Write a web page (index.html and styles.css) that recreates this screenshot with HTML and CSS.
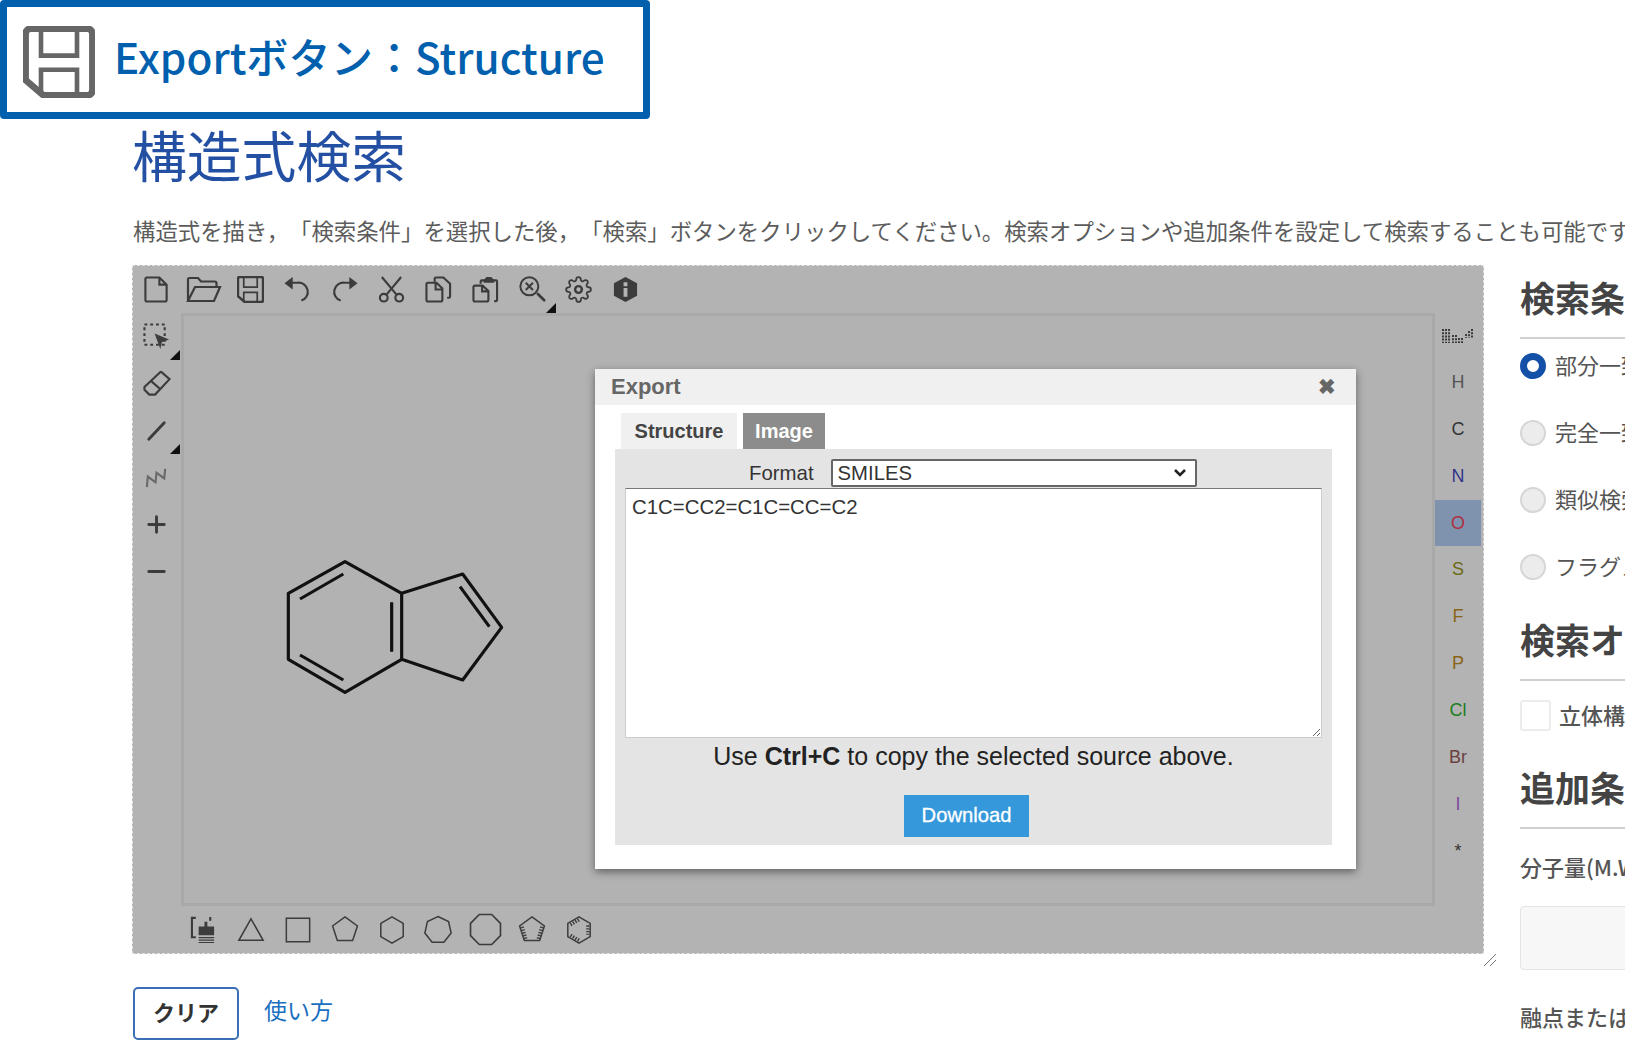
FILE: index.html
```html
<!DOCTYPE html>
<html>
<head>
    <title>構造式検索</title>
    <meta http-equiv="Content-Type" content="text/html; charset=utf-8" />
    <link rel="stylesheet" href="styles.css">
</head>
<body>
<svg class="defs" width="0" height="0">
    <symbol id="i-save" viewBox="0 0 28 28">
        <path class="save-outer" d="M3 1H25a2 2 0 0 1 2 2V25a2 2 0 0 1-2 2H8L1 21V3a2 2 0 0 1 2-2z"/>
        <path class="save-inner" d="M7 1V11.5H21V1M7 27V17H21V27"/>
    </symbol>
</svg>

<!-- Выноска сверху -->
<div class="callout">
    <svg class="callout-icon"><use href="#i-save"/></svg>
    <div class="callout-text">Exportボタン：Structure</div>
</div>

<div class="page">
    <div class="main-col">
        <h1 class="page-title">構造式検索</h1>
        <p class="page-lead">構造式を描き，「検索条件」を選択した後，「検索」ボタンをクリックしてください。検索オプションや追加条件を設定して検索することも可能です。</p>

        <div class="editor">
            <div class="toolbar toolbar-top">
                <div class="tool"><svg class="ico" viewBox="0 0 28 28"><path d="M4 1.5H17L24.5 9V25a1.5 1.5 0 0 1-1.5 1.5H4A1.5 1.5 0 0 1 2.500 25V3A1.500 1.500 0 0 1 4 1.500zM17 1.500V9H24.500"/></svg></div>
                <div class="tool"><svg class="ico ico-wide" viewBox="0 0 34 26"><path d="M1 24V3a1.500 1.500 0 0 1 1.500-1.500H11L14 5H28a1.500 1.500 0 0 1 1.500 1.500V10M1 24.500H27L33 10.500H8L1 24.500z"/></svg></div>
                <div class="tool"><svg class="ico"><use href="#i-save"/></svg></div>
                <div class="tool"><svg class="ico" viewBox="0 0 28 28"><path d="M7 7H14a9.500 9.500 0 0 1 4 18.500"/><path class="solid" d="M.5 7.500L9 1V14z"/></svg></div>
                <div class="tool"><svg class="ico" viewBox="0 0 28 28"><path d="M21 7H14a9.500 9.500 0 0 0-4 18.500"/><path class="solid" d="M27.500 7.500L19 1V14z"/></svg></div>
                <div class="tool"><svg class="ico" viewBox="0 0 28 28"><path d="M4 1L19 19M24 1L9 19"/><circle cx="6" cy="22.500" r="4"/><circle cx="22" cy="22.500" r="4"/></svg></div>
                <div class="tool"><svg class="ico" viewBox="0 0 28 28"><path d="M10 6V3a1.500 1.500 0 0 1 1.500-1.500H19L26 8V21a1.500 1.500 0 0 1-1.500 1.500H23"/><path d="M3 7H12L18 13V25a1.500 1.500 0 0 1-1.500 1.500H3A1.500 1.500 0 0 1 1.500 25V8.500A1.500 1.500 0 0 1 3 7zM11 7V14H18"/></svg></div>
                <div class="tool"><svg class="ico" viewBox="0 0 28 28"><path d="M9 8V5.500a1 1 0 0 1 1-1H25a1 1 0 0 1 1 1V25a1 1 0 0 1-1 1H23"/><path class="solid" d="M12 4.500L15 1H20L23 4.500V7H12z"/><path d="M3 10H11L17 15.500V25a1.500 1.500 0 0 1-1.500 1.500H3A1.500 1.500 0 0 1 1.500 25V11.500A1.500 1.500 0 0 1 3 10zM10.500 10V16H17"/></svg></div>
                <div class="tool tool-more"><svg class="ico" viewBox="0 0 30 30"><circle cx="11.500" cy="11.500" r="10"/><path d="M7.500 7.500L15.500 15.500M15.500 7.500L7.500 15.500"/><path class="thick" d="M21 20L28 27"/></svg></div>
                <div class="tool"><svg class="ico" viewBox="0 0 24 24"><circle cx="12" cy="12" r="3"/><path class="thin" d="M19.400 15a1.650 1.650 0 0 0 .33 1.820l.06.06a2 2 0 0 1 0 2.830 2 2 0 0 1-2.830 0l-.06-.06a1.650 1.650 0 0 0-1.820-.33 1.650 1.650 0 0 0-1 1.510V21a2 2 0 0 1-2 2 2 2 0 0 1-2-2v-.09A1.650 1.650 0 0 0 9 19.400a1.650 1.650 0 0 0-1.820.33l-.06.06a2 2 0 0 1-2.830 0 2 2 0 0 1 0-2.830l.06-.06a1.650 1.650 0 0 0 .33-1.820 1.650 1.650 0 0 0-1.510-1H3a2 2 0 0 1-2-2 2 2 0 0 1 2-2h.09A1.650 1.650 0 0 0 4.600 9a1.650 1.650 0 0 0-.33-1.820l-.06-.06a2 2 0 0 1 0-2.830 2 2 0 0 1 2.830 0l.06.06a1.650 1.650 0 0 0 1.820.33H9a1.650 1.650 0 0 0 1-1.510V3a2 2 0 0 1 2-2 2 2 0 0 1 2 2v.09a1.650 1.650 0 0 0 1 1.510 1.650 1.650 0 0 0 1.820-.33l.06-.06a2 2 0 0 1 2.830 0 2 2 0 0 1 0 2.830l-.06.06a1.650 1.650 0 0 0-.33 1.820V9a1.650 1.650 0 0 0 1.510 1H21a2 2 0 0 1 2 2 2 2 0 0 1-2 2h-.09a1.650 1.650 0 0 0-1.510 1z"/></svg></div>
                <div class="tool"><svg class="ico" viewBox="0 0 28 28"><path class="solid" d="M14 1L26 7.500V20.500L14 27L2 20.500V7.500z"/><path class="info-dot" d="M12 6.500h4v4h-4zM12 12.500h4v9h-4z"/></svg></div>
            </div>

            <div class="toolbar-left">
                <div class="tool tool-more"><svg class="ico" viewBox="0 0 28 28"><rect class="dotted" x="1.500" y="1.500" width="21" height="21"/><path class="solid" d="M27 17L12 11L18 27L19.500 20z"/></svg></div>
                <div class="tool"><svg class="ico ico-wide" viewBox="0 0 30 28"><path d="M20 2.500L28 9.500L13 25.500H7L2 20.500V17.500L18 2.500a1.500 1.500 0 0 1 2 0zM9 11.500L18.500 20"/></svg></div>
                <div class="tool tool-more"><svg class="ico" viewBox="0 0 28 28"><path class="thick" d="M6 23L22 6"/></svg></div>
                <div class="tool"><svg class="ico ico-faded" viewBox="0 0 28 28"><path d="M4 24L5 13L13 19L14 9L22 15L23 5"/></svg></div>
                <div class="tool"><svg class="ico" viewBox="0 0 28 28"><path class="thick" d="M14 6V22M6 14H22"/></svg></div>
                <div class="tool"><svg class="ico" viewBox="0 0 28 28"><path class="thick" d="M6 14H22"/></svg></div>
            </div>

            <div class="canvas">
                <svg class="molecule" viewBox="0 0 780 510">
                    <path d="M255 65L425 160V358L255 457L85 358V160zM425 160L608 102L725 262L608 420L425 358M120 177L250 102M395 187V335M120 345L250 420M600 140L688 260"/>
                </svg>
            </div>

            <div class="toolbar-right">
                <div class="elem"><svg class="periodic" viewBox="0 0 32 18"><path d="M1 3v14M4 3v14M7 3v14M11 9v8M14 9v8M17 12v5M20 12v5M24 8v4M27 5v7M30 3v9"/></svg></div>
                <div class="elem el-h">H</div>
                <div class="elem el-c">C</div>
                <div class="elem el-n">N</div>
                <div class="elem el-o">O</div>
                <div class="elem el-s">S</div>
                <div class="elem el-f">F</div>
                <div class="elem el-f">P</div>
                <div class="elem el-cl">Cl</div>
                <div class="elem el-br">Br</div>
                <div class="elem el-i">I</div>
                <div class="elem el-c">*</div>
            </div>

            <div class="toolbar toolbar-bottom">
                <div class="tool"><svg class="ico" viewBox="0 0 28 28"><path d="M6 2H2V22H6M21 1V5"/><path class="solid" d="M9 11H15V6H18V11H25V20H9z"/><path class="thin-line" d="M9 22.500H25M9 25H25M9 27.500H25"/></svg></div>
                <div class="tool"><svg class="ring" viewBox="0 0 30 30"><path d="M15 3L28 26H2z"/></svg></div>
                <div class="tool"><svg class="ring" viewBox="0 0 30 30"><path d="M2.500 2.500H27.500V27.500H2.500z"/></svg></div>
                <div class="tool"><svg class="ring" viewBox="0 0 30 30"><path d="M15 1L28.300 10.700L23.200 26.300H6.800L1.700 10.700z"/></svg></div>
                <div class="tool"><svg class="ring" viewBox="0 0 30 30"><path d="M15 1L27 8V22L15 29L3 22V8z"/></svg></div>
                <div class="tool"><svg class="ring" viewBox="0 0 30 30"><path d="M15 .5L26.300 6L29.100 18.200L21.300 28.100H8.700L.9 18.200L3.700 6z"/></svg></div>
                <div class="tool"><svg class="ring ring-big" viewBox="0 0 30 30"><path d="M9 .5H21L29.500 9V21L21 29.500H9L.5 21V9z"/></svg></div>
                <div class="tool"><svg class="ring" viewBox="0 0 30 30"><path d="M15 1L28.300 10.700L23.200 26.300H6.800L1.700 10.700z"/><path class="hatch" d="M4.500 11.500L8.500 25M25.500 11.500L21.500 25"/></svg></div>
                <div class="tool"><svg class="ring" viewBox="0 0 30 30"><path d="M15 1L27 8V22L15 29L3 22V8z"/><path class="hatch" d="M6 9.500L15 4M24.500 10V20M6 20.500L15 26"/></svg></div>
            </div>

            <!-- Модальное окно экспорта -->
            <div class="modal">
                <div class="modal-head">
                    <span>Export</span>
                    <span class="modal-close">✖</span>
                </div>
                <div class="modal-tabs">
                    <div class="modal-tab tab-active">Structure</div>
                    <div class="modal-tab tab-off">Image</div>
                </div>
                <div class="modal-panel">
                    <div class="format-row">
                        <label class="format-label">Format</label>
                        <select class="format-select"><option>SMILES</option></select>
                    </div>
                    <textarea class="source-box">C1C=CC2=C1C=CC=C2</textarea>
                    <div class="copy-note">Use <b>Ctrl+C</b> to copy the selected source above.</div>
                    <div class="download-btn">Download</div>
                </div>
            </div>

            <svg class="grip" viewBox="0 0 14 14"><path d="M1 13L13 1M7 13L13 7"/></svg>
        </div>

        <div class="bottom-row">
            <div class="clear-btn">クリア</div>
            <a class="help-link">使い方</a>
        </div>
    </div>

    <div class="side-col">
        <h2 class="side-title">検索条件</h2>
        <div class="radio-list">
            <div class="radio-row"><span class="radio radio-on"></span>部分一致検索</div>
            <div class="radio-row"><span class="radio"></span>完全一致検索</div>
            <div class="radio-row"><span class="radio"></span>類似検索</div>
            <div class="radio-row"><span class="radio"></span>フラグメント検索</div>
        </div>

        <h2 class="side-title title-option">検索オプション</h2>
        <div class="check-row"><span class="check"></span>立体構造を考慮</div>

        <h2 class="side-title title-extra">追加条件</h2>
        <div class="field-label">分子量(M.W.)</div>
        <div class="field-input"></div>
        <div class="field-label label-melt">融点または沸点</div>
        <div class="field-input"></div>
    </div>
</div>

</body>
</html>
```

FILE: styles.css
```css
html, body {margin: 0; height: 100%; overflow: hidden; background: white;}
body {font-family: "Noto Sans CJK JP", "Noto Sans", sans-serif; color: #444;}
.defs {display: block; height: 0;}
.save-outer {stroke-width: 2.6;}
.save-inner {stroke-width: 1.8;}

/* выноска */
.callout {
    position: absolute;
    left: 0;
    top: 0;
    z-index: 5;
    box-sizing: border-box;
    width: 650px;
    height: 119px;
    border: 7px solid #0060ae;
    border-radius: 4px;
    background: white;
    display: flex;
    align-items: center;
    padding-left: 16px;
}
.callout-icon {
    width: 72px;
    height: 72px;
    margin-top: 4px;
    fill: none;
    stroke: #666;
    flex: none;
}
.callout-text {
    margin: 0 0 8px 19px;
    font-size: 42.2px;
    font-weight: 500;
    color: #0060ae;
    white-space: nowrap;
}

.page {
    display: flex;
    width: 1900px;
    padding-left: 132px;
}
.main-col {width: 1352px; flex: none; padding-top: 116px;}
.page-title {
    margin: 0;
    font-size: 54.8px;
    font-weight: 400;
    line-height: 74px;
    color: #2450a4;
}
.page-lead {
    margin: 22px 0 0 1px;
    font-size: 22.4px;
    line-height: 36px;
    height: 36px;
    white-space: nowrap;
    color: #5c5c5c;
    text-spacing-trim: space-all;
}

/* редактор */
.editor {
    position: relative;
    box-sizing: border-box;
    margin-top: 17px;
    width: 1352px;
    height: 689px;
    border: 1px dashed #e2e2e2;
    background: #b3b3b3;
    display: grid;
    grid-template-columns: 48px 1fr 48px;
    grid-template-rows: 47px 1fr 47px;
}
.toolbar {display: flex; grid-column: 1 / 4;}
.toolbar-top {padding-left: 0.5px;}
.toolbar-bottom {padding-left: 47.5px;}
.toolbar-left {display: flex; flex-direction: column; padding-left: 0.5px;}
.tool {
    position: relative;
    width: 46.9px;
    height: 47px;
    flex: none;
    display: flex;
    align-items: center;
    justify-content: center;
}
.tool-more::after {
    content: "";
    position: absolute;
    right: 0;
    bottom: 0;
    border-style: solid;
    border-width: 0 0 10px 10px;
    border-color: transparent transparent #111 transparent;
}
.ico {
    width: 27px;
    height: 27px;
    fill: none;
    stroke: #3c3c3c;
    stroke-width: 2.2;
    overflow: visible;
}
.ico-wide {width: 34px;}
.ico-faded {stroke: #6a6a6a;}
.solid {fill: #3c3c3c; stroke: none;}
.thin {stroke-width: 1.6;}
.thick {stroke-width: 3; stroke-linecap: round;}
.dotted {stroke-dasharray: 3 3;}
.info-dot {fill: #b3b3b3; stroke: none;}
.thin-line {stroke-width: 1.2;}
.ring {width: 28px; height: 28px; fill: none; stroke: #3c3c3c; stroke-width: 1.6; overflow: visible;}
.ring-big {width: 31px; height: 31px;}
.hatch {stroke-width: 3.5; stroke-dasharray: 1.5 1.5;}

.canvas {
    position: relative;
    background: #b2b2b2;
    box-shadow: inset 3px 3px 0 #a9a9a9, inset -3px -3px 0 #a9a9a9;
}
.molecule {
    position: absolute;
    left: 79px;
    top: 227px;
    width: 260px;
    height: 170px;
    fill: none;
    stroke: #111;
    stroke-width: 9.5;
    stroke-linejoin: round;
}

.toolbar-right {display: flex; flex-direction: column; padding-right: 2px; margin-top: -1px;}
.elem {
    height: 46.9px;
    flex: none;
    display: flex;
    align-items: center;
    justify-content: center;
    font-family: "Liberation Sans", sans-serif;
    font-size: 18px;
}
.periodic {width: 32px; height: 18px; fill: none; stroke: #3c3c3c; stroke-width: 2; stroke-dasharray: 2 1.2;}
.el-h {color: #555;}
.el-c {color: #333;}
.el-n {color: #33338a;}
.el-o {color: #b03040; background: #7f93ae;}
.el-s {color: #6b6b10;}
.el-f {color: #8a6415;}
.el-cl {color: #1e7d1e;}
.el-br {color: #6a4040;}
.el-i {color: #7c4a9c;}

.grip {
    position: absolute;
    right: -14px;
    bottom: -14px;
    width: 14px;
    height: 14px;
    fill: none;
    stroke: #777;
    stroke-width: 1;
}

/* модальное окно */
.modal {
    position: absolute;
    left: 462px;
    top: 103px;
    width: 761px;
    height: 500px;
    background: white;
    box-shadow: 0 3px 8px rgba(0, 0, 0, 0.45);
    font-family: "Liberation Sans", sans-serif;
    color: #333;
}
.modal-head {
    height: 36px;
    background: #f0f0f0;
    display: flex;
    align-items: center;
    justify-content: space-between;
    padding: 0 20px 0 16px;
    font-size: 22px;
    font-weight: bold;
    color: #666;
}
.modal-close {font-size: 21px;}
.modal-tabs {display: flex; gap: 6px; margin: 8px 0 0 26px;}
.modal-tab {
    height: 36px;
    display: flex;
    align-items: center;
    justify-content: center;
    font-size: 20px;
    font-weight: bold;
}
.tab-active {width: 116px; background: #f0f0f0; color: #444;}
.tab-off {width: 82px; background: #8c8c8c; color: white;}
.modal-panel {
    box-sizing: border-box;
    margin-left: 20px;
    width: 717px;
    height: 396px;
    background: #e4e4e4;
    padding: 10px 10px 0;
    display: flex;
    flex-direction: column;
}
.format-row {display: flex; align-items: center; height: 28px;}
.format-label {margin-left: 124px; font-size: 20.4px;}
.format-select {
    box-sizing: border-box;
    margin-left: 17px;
    width: 366px;
    height: 28px;
    border: 2px solid #666;
    border-radius: 2px;
    padding: 0 0 0 5px;
    appearance: none;
    background: white url("data:image/svg+xml,%3Csvg xmlns='http://www.w3.org/2000/svg' width='14' height='10'%3E%3Cpath d='M2 2l5 5 5-5' fill='none' stroke='%23222' stroke-width='2.6'/%3E%3C/svg%3E") no-repeat right 8px center;
    font-family: "Liberation Sans", sans-serif;
    font-size: 20.3px;
    color: #333;
}
.source-box {
    box-sizing: border-box;
    margin: 1px 0 0;
    width: 697px;
    height: 250px;
    flex: none;
    border: 1px solid #ccc;
    border-top-color: #777;
    padding: 7px 6px;
    font-family: "Liberation Sans", sans-serif;
    font-size: 20.4px;
    color: #333;
    outline: none;
}
.copy-note {
    margin-top: 4px;
    text-align: center;
    font-size: 25px;
    line-height: 28px;
    color: #222;
}
.download-btn {
    margin: 25px 0 0 279px;
    width: 125px;
    height: 42px;
    padding-bottom: 2px;
    box-sizing: border-box;
    display: flex;
    align-items: center;
    justify-content: center;
    background: #3498db;
    color: white;
    font-size: 20.2px;
    -webkit-text-stroke: 0.3px white;
}

.bottom-row {display: flex; align-items: center; margin-top: 33px; margin-left: 1px;}
.clear-btn {
    box-sizing: border-box;
    width: 106px;
    height: 53px;
    padding-bottom: 5px;
    display: flex;
    align-items: center;
    justify-content: center;
    border: 2px solid #3a6fb5;
    border-radius: 5px;
    font-size: 22px;
    font-weight: bold;
    color: #333;
}
.help-link {margin: 0 0 10px 25px; font-size: 23px; color: #1a6fc0;}

/* правая колонка */
.side-col {width: 400px; flex: none; margin-left: 36px; padding-top: 271px;}
.side-title {
    margin: 0;
    padding-bottom: 14px;
    border-bottom: 2px solid #d0d0d0;
    font-size: 35px;
    line-height: 52px;
    font-weight: 700;
    color: #444;
}
.radio-list {margin-top: -7px;}
.radio-row {
    box-sizing: border-box;
    display: flex;
    align-items: center;
    height: 67px;
    padding-bottom: 4px;
    font-size: 22px;
    white-space: nowrap;
    color: #555;
}
.radio {
    box-sizing: border-box;
    width: 26px;
    height: 26px;
    margin: 4px 9px 0 0;
    border: 2px solid #d6d6d6;
    border-radius: 50%;
    background: #ececec;
}
.radio-on {border: 7px solid #1450a8; background: white;}
.title-option {margin-top: 13px;}
.title-extra {margin-top: 16px;}
.check-row {
    box-sizing: border-box;
    display: flex;
    align-items: center;
    height: 60px;
    margin-top: 4px;
    padding-bottom: 2px;
    font-size: 22px;
    font-weight: 500;
    white-space: nowrap;
    color: #555;
}
.check {
    box-sizing: border-box;
    width: 31px;
    height: 31px;
    margin: 2px 8px 0 0;
    border: 2px solid #ececec;
    border-radius: 3px;
}
.field-label {margin-top: 21px; font-size: 22px; font-weight: 500; line-height: 32px; white-space: nowrap; color: #555;}
.label-melt {margin-top: 30px;}
.field-input {
    box-sizing: border-box;
    margin-top: 24px;
    width: 380px;
    height: 64px;
    border: 1px solid #e4e4e4;
    border-radius: 4px;
    background: #f7f7f7;
}
```
